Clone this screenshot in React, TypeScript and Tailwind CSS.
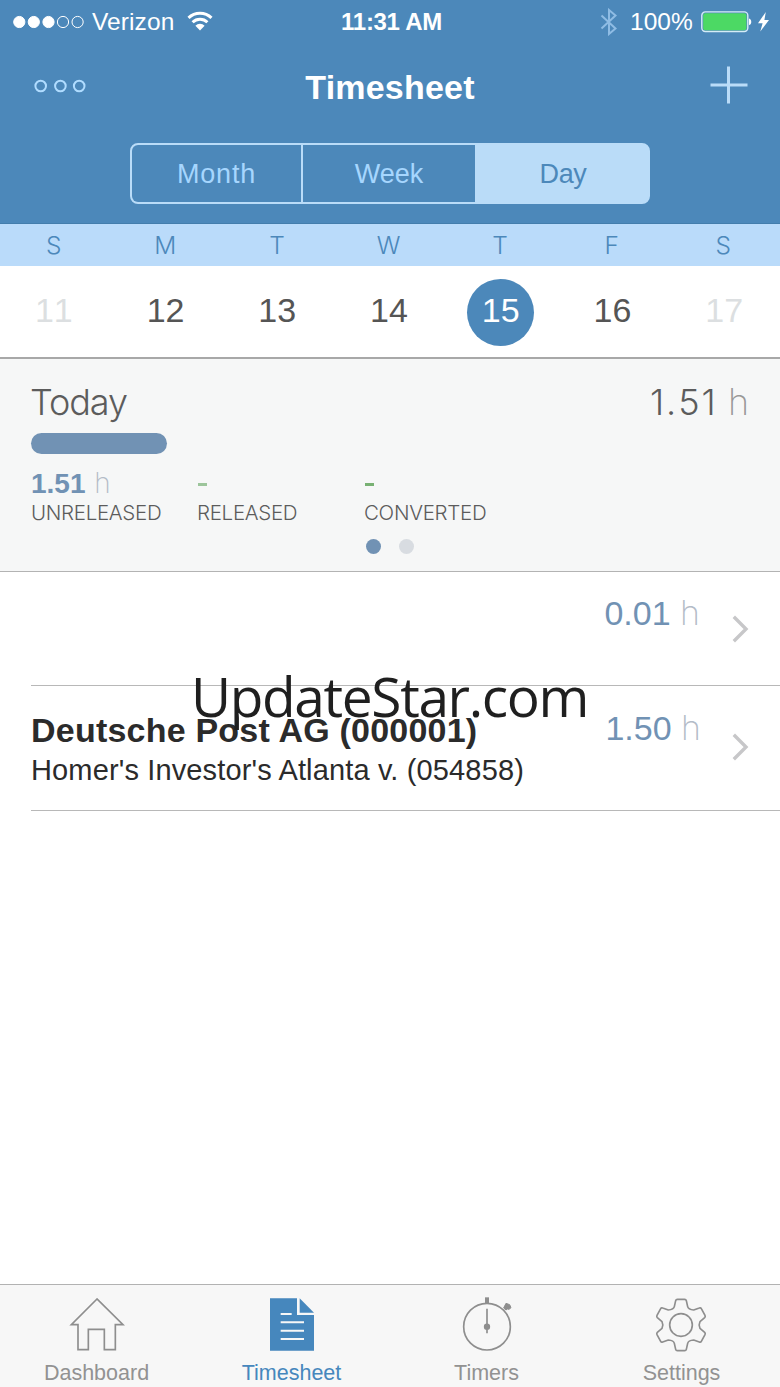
import React from "react";

const days = [
  { label: "S", date: "11", weekend: true },
  { label: "M", date: "12" },
  { label: "T", date: "13" },
  { label: "W", date: "14" },
  { label: "T", date: "15", active: true },
  { label: "F", date: "16" },
  { label: "S", date: "17", weekend: true },
];

function StatusBar() {
  return (
    <div className="flex h-[44px] shrink-0 items-center justify-between pl-[13px] pr-[10px] text-[24.5px] leading-none text-white">
      <div className="flex w-[320px] items-center">
        <svg width="72" height="14" viewBox="0 0 72 14" fill="none" stroke="white" strokeWidth="1">
          <circle cx="6.3" cy="7" r="5.6" fill="white" />
          <circle cx="20.8" cy="7" r="5.6" fill="white" />
          <circle cx="35.5" cy="7" r="5.6" fill="white" />
          <circle cx="50" cy="7" r="5.6" />
          <circle cx="64.6" cy="7" r="5.6" />
        </svg>
        <span className="ml-[7px] tracking-[0.1px]">Verizon</span>
        <svg className="mb-[2px] ml-[13px]" width="26" height="20" viewBox="0 0 26 20" fill="none" stroke="white" strokeWidth="3">
          <path d="M1.500 6.800a16.500 16.500 0 0 1 23 0" />
          <path d="M5.600 11.300a10.600 10.600 0 0 1 14.800 0" />
          <path d="M13 19.500l-4.600-4.800a6.500 6.500 0 0 1 9.200 0z" fill="white" stroke="none" />
        </svg>
      </div>
      <span className="mr-[4px] text-[24px] font-bold tracking-[-0.3px]">11:31 AM</span>
      <div className="flex w-[316px] items-center justify-end">
        <svg width="18" height="28" viewBox="0 0 18 28" fill="none" stroke="#8fbce4" strokeWidth="2">
          <path d="M1.500 7.500l14 13L9 26V2l6.500 5.500-14 13" />
        </svg>
        <span className="ml-[12px] tracking-[0.1px] [font-kerning:none]">100%</span>
        <svg className="ml-[8px]" width="52" height="22" viewBox="0 0 52 22">
          <rect x="0.800" y="0.900" width="46" height="19.600" rx="3.500" fill="none" stroke="#d5ecf7" strokeWidth="1.400" />
          <rect x="2.200" y="2.200" width="43.200" height="17" rx="2" fill="#4cd964" />
          <path d="M48 7.500c3 .6 3 6 0 6.600z" fill="white" />
        </svg>
        <svg className="ml-[4px]" width="13" height="20" viewBox="0 0 13 20" fill="white">
          <path d="M8.800 0L1 11.200h4.600L3.300 19.500 12 8H7.400z" />
        </svg>
      </div>
    </div>
  );
}

function Header() {
  return (
    <header className="flex h-[224px] flex-col border-b border-[#437dac] bg-[#4c88ba]">
      <StatusBar />
      <div className="flex h-[87px] items-center justify-between pl-[33px] pr-[32px]">
        <svg className="mb-[4px]" width="54" height="14" viewBox="0 0 54 14" fill="none" stroke="#b0dcff" strokeWidth="2">
          <circle cx="7.700" cy="7" r="5.300" />
          <circle cx="27.400" cy="7" r="5.300" />
          <circle cx="46.200" cy="7" r="5.300" />
        </svg>
        <h1 className="ml-[-17px] pb-px text-[34px] font-bold leading-none tracking-[0.2px] text-white">Timesheet</h1>
        <svg className="mb-[5px]" width="38" height="38" viewBox="0 0 38 38" stroke="#badcf8" strokeWidth="3">
          <path d="M0.500 19h37M18.500 0.500v37" />
        </svg>
      </div>
      <div className="mx-auto mt-[12px] flex h-[61px] w-[520px] overflow-hidden rounded-[8px] border-2 border-[#badcf8] bg-[#badcf8] text-[27px] text-[#a6d6fe]">
        <div className="flex w-[169px] items-center justify-center bg-[#4c88ba] pt-px tracking-[0.8px]">Month</div>
        <div className="flex w-[174px] items-center justify-center border-l-2 border-[#badcf8] bg-[#4c88ba] pt-px">Week</div>
        <div className="flex flex-1 items-center justify-center pl-[3px] pt-px tracking-[-0.3px] text-[#4c88ba]">Day</div>
      </div>
    </header>
  );
}

function WeekStrip() {
  return (
    <div>
      <div className="h-[42px] bg-[#badbfa]">
        <div className="-ml-[2px] grid h-full w-[781px] grid-cols-7 items-center text-center font-['Inter'] text-[24.5px] font-light text-[#4c88ba]">
          {days.map((d, i) => (
            <span key={i}>{d.label}</span>
          ))}
        </div>
      </div>
      <div className="h-[93px] border-b-2 border-[#a8a8a8] bg-white">
        <div className="-ml-[2px] grid h-full w-[782px] grid-cols-7 items-center justify-items-center pt-px text-[34px] leading-none [font-kerning:none]">
          {days.map((d) => (
            <span
              key={d.date}
              className={
                d.active
                  ? "flex size-[67px] items-center justify-center rounded-full bg-[#4c88ba] pb-[4px] text-white"
                  : d.weekend
                    ? "pb-[4px] text-[#dcdfe1]"
                    : "pb-[4px] text-[#555]"
              }
            >
              {d.date}
            </span>
          ))}
        </div>
      </div>
    </div>
  );
}

function Summary() {
  return (
    <section className="flex h-[213px] flex-col border-b border-[#b3b3b3] bg-[#f6f7f7] pl-[31px] pr-[31px] pt-[22px] text-[#5c5c5c]">
      <div className="flex h-[42px] items-center justify-between font-['Inter'] text-[36px] font-light leading-none">
        <span className="-ml-px tracking-[-1.1px]">Today</span>
        <span className="tracking-[2px] [font-kerning:none]">
          1.51 <span className="-ml-[2px] font-extralight tracking-normal text-[#999]">h</span>
        </span>
      </div>
      <div className="mt-[10px] h-[21px] w-[136px] rounded-full bg-[#7192b4]" />
      <div className="mt-[15px] flex">
        <div className="w-[166px]">
          <div className="h-[28px] text-[28px] font-bold leading-[28px] text-[#7192b4]">
            1.51 <span className="ml-px font-['Inter'] font-extralight text-[#b4bcc8]">h</span>
          </div>
          <Caption text="UNRELEASED" />
        </div>
        <div className="w-[167px]">
          <div className="flex h-[28px] items-center pl-px pt-[3px]">
            <div className="h-[3px] w-[9px] bg-[#9cc59b]" />
          </div>
          <Caption text="RELEASED" />
        </div>
        <div>
          <div className="flex h-[28px] items-center pl-px pt-[3px]">
            <div className="h-[3px] w-[9px] bg-[#78b173]" />
          </div>
          <Caption text="CONVERTED" />
        </div>
      </div>
      <div className="mt-[14px] flex justify-center gap-[18px]">
        <span className="size-[15px] rounded-full bg-[#7192b4]" />
        <span className="size-[15px] rounded-full bg-[#d8dce1]" />
      </div>
    </section>
  );
}

function Caption({ text }: { text: string }) {
  return (
    <div className="mt-[4px] h-[24px] font-['Inter'] text-[20.5px] font-light leading-[24px] tracking-[-0.3px]">{text}</div>
  );
}

function Hours({ value }: { value: string }) {
  return (
    <span className="text-[34px] leading-[34px] text-[#7192b4] [font-kerning:none]">
      {value} <span className="font-['Inter'] font-extralight text-[#b4bcc8]">h</span>
    </span>
  );
}

function Chevron({ className }: { className: string }) {
  return (
    <svg className={className} width="17" height="28" viewBox="0 0 17 28" fill="none" stroke="#c7c7c9" strokeWidth="3.400">
      <path d="M1.800 1.800L14 14 1.800 26.200" />
    </svg>
  );
}

function Entries() {
  return (
    <div className="relative flex-1">
      <div className="ml-[31px] flex h-[114px] items-start justify-end border-b border-[#b8b8b8] pr-[31px] pt-[24px]">
        <Hours value="0.01" />
        <Chevron className="ml-[32px] mt-[19px]" />
      </div>
      <div className="ml-[31px] flex h-[125px] items-start border-b border-[#b8b8b8] pr-[31px] pt-[25px] text-[#2b2b2b]">
        <div className="flex-1 whitespace-nowrap">
          <div className="pt-px text-[34px] font-bold leading-[36px] tracking-[0.22px]">Deutsche Post AG (000001)</div>
          <div className="mt-[6px] text-[29px] leading-[32px] tracking-[0.14px]">Homer's Investor's Atlanta v. (054858)</div>
        </div>
        <Hours value="1.50" />
        <Chevron className="ml-[31px] mt-[22px]" />
      </div>
      <div className="absolute left-[191px] top-[86px] whitespace-nowrap font-['Open_Sans'] text-[55px] leading-[75px] tracking-[-1.35px] text-[#1f1f1f]">
        UpdateStar.com
      </div>
    </div>
  );
}

function HomeIcon() {
  return (
    <svg width="56" height="56" viewBox="0 0 168 168" fill="none" stroke="#8e8e8e" strokeWidth="5">
      <path d="M84 9L7 86h20v75h31v-61h48v61h33V86h23z" />
    </svg>
  );
}

function SheetIcon() {
  return (
    <svg width="56" height="56" viewBox="0 0 168 168" fill="#4687bd">
      <path d="M18 7h81v50h51v107H18z" />
      <path d="M107 7v43h43z" />
      <path d="M50 54h33M50 79h70M50 104h70M50 129h70" stroke="#f7f7f7" strokeWidth="6" />
    </svg>
  );
}

function TimerIcon() {
  return (
    <svg width="56" height="56" viewBox="0 0 168 168" fill="none" stroke="#8e8e8e" strokeWidth="5">
      <circle cx="84" cy="92" r="70" />
      <path d="M84 38v74" />
      <circle cx="84" cy="92" r="7" fill="#8e8e8e" />
      <path d="M84 4v20" strokeWidth="12" />
      <path d="M141 22l11 4 4 9-6 5-5-1-4 3-7-6 3-6z" fill="#8e8e8e" strokeWidth="3" strokeLinejoin="round" />
    </svg>
  );
}

function GearIcon() {
  return (
    <svg className="-ml-[2px]" width="56" height="56" viewBox="-84 -87 168 168" fill="none" stroke="#8e8e8e" strokeWidth="5" strokeLinejoin="round">
      <path d="M-20-55L-16-73Q-15-77-11-77H11Q15-77 16-73L20-55Q22-46 38-45L55-51Q59-53 61-49L72-29Q74-25 71-22L57-10Q52 0 57 10L71 22Q74 25 72 29L61 49Q59 53 55 51L38 45Q22 46 20 55L16 73Q15 77 11 77H-11Q-15 77-16 73L-20 55Q-22 46-38 45L-55 51Q-59 53-61 49L-72 29Q-74 25-71 22L-57 10Q-52 0-57-10L-71-22Q-74-25-72-29L-61-49Q-59-53-55-51L-38-45Q-22-46-20-55z" />
      <circle r="34" />
    </svg>
  );
}

const tabs = [
  { label: "Dashboard", icon: <HomeIcon /> },
  { label: "Timesheet", icon: <SheetIcon />, active: true },
  { label: "Timers", icon: <TimerIcon /> },
  { label: "Settings", icon: <GearIcon /> },
];

export default function App() {
  return (
    <div className="flex h-[1387px] w-[780px] flex-col overflow-hidden bg-white font-['Liberation_Sans',sans-serif]">
      <Header />
      <WeekStrip />
      <Summary />
      <Entries />
      <nav className="h-[103px] border-t border-[#b2b2b2] bg-[#f7f7f7]">
        <div className="-ml-px grid w-[780px] grid-cols-4 pt-[11px]">
          {tabs.map((tab) => (
            <div key={tab.label} className="flex flex-col items-center">
              {tab.icon}
              <span
                className={
                  tab.active
                    ? "mt-[9px] text-[21.5px] leading-[25px] text-[#4687bd]"
                    : "mt-[9px] text-[21.5px] leading-[25px] text-[#929292]"
                }
              >
                {tab.label}
              </span>
            </div>
          ))}
        </div>
      </nav>
    </div>
  );
}
